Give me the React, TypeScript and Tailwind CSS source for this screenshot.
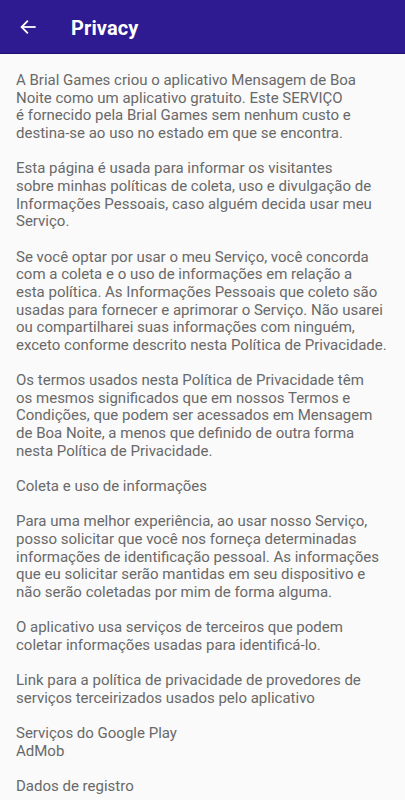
import React from 'react';

const paragraphs: string[][] = [
  [
    'A Brial Games criou o aplicativo Mensagem de Boa',
    'Noite como um aplicativo gratuito. Este SERVIÇO',
    'é fornecido pela Brial Games sem nenhum custo e',
    'destina-se ao uso no estado em que se encontra.',
  ],
  [
    'Esta página é usada para informar os visitantes',
    'sobre minhas políticas de coleta, uso e divulgação de',
    'Informações Pessoais, caso alguém decida usar meu',
    'Serviço.',
  ],
  [
    'Se você optar por usar o meu Serviço, você concorda',
    'com a coleta e o uso de informações em relação a',
    'esta política. As Informações Pessoais que coleto são',
    'usadas para fornecer e aprimorar o Serviço. Não usarei',
    'ou compartilharei suas informações com ninguém,',
    'exceto conforme descrito nesta Política de Privacidade.',
  ],
  [
    'Os termos usados nesta Política de Privacidade têm',
    'os mesmos significados que em nossos Termos e',
    'Condições, que podem ser acessados em Mensagem',
    'de Boa Noite, a menos que definido de outra forma',
    'nesta Política de Privacidade.',
  ],
  ['Coleta e uso de informações'],
  [
    'Para uma melhor experiência, ao usar nosso Serviço,',
    'posso solicitar que você nos forneça determinadas',
    'informações de identificação pessoal. As informações',
    'que eu solicitar serão mantidas em seu dispositivo e',
    'não serão coletadas por mim de forma alguma.',
  ],
  [
    'O aplicativo usa serviços de terceiros que podem',
    'coletar informações usadas para identificá-lo.',
  ],
  [
    'Link para a política de privacidade de provedores de',
    'serviços terceirizados usados pelo aplicativo',
  ],
  ['Serviços do Google Play', 'AdMob'],
  ['Dados de registro'],
];

const App = () => {
  return (
    <div className="w-[405px] h-[800px] overflow-hidden bg-[#fafafa] font-['Roboto',sans-serif]">
      <header className="h-[54px] bg-[#2e1a91] flex items-center border-b border-[#1f1170]">
        <button className="w-[56px] h-full flex items-center justify-center text-white">
          <svg width="18" height="18" viewBox="0 0 24 24" fill="none" stroke="currentColor" strokeWidth="2.4" strokeLinecap="square">
            <path d="M21 12H4" />
            <path d="M11 4.5L3.5 12L11 19.5" />
          </svg>
        </button>
        <h1 className="ml-[15px] mt-[2px] text-white text-[20px] font-bold tracking-[0.1px]">Privacy</h1>
      </header>

      <main className="px-4 pt-[18px] text-[15px] leading-[17.65px] text-[#696969]">
        {paragraphs.map((lines, i) => (
          <p key={i} className="mb-[17.65px]">
            {lines.map((line, j) => (
              <span key={j} className="block whitespace-nowrap">
                {line}
              </span>
            ))}
          </p>
        ))}
      </main>
    </div>
  );
};

export default App;
